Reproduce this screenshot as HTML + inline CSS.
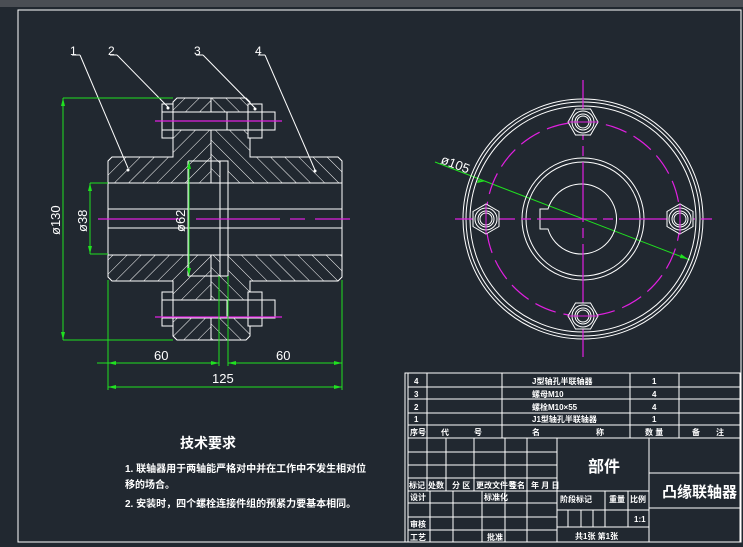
<!DOCTYPE html>
<html><head><meta charset="utf-8"><style>
html,body{margin:0;padding:0;background:#212830;}
svg{display:block}
text{font-family:"Liberation Sans","Noto Sans CJK SC",sans-serif;fill:#fff}
.cj{font-family:"Liberation Sans","Noto Sans CJK SC",sans-serif;font-weight:bold}
</style></head><body>
<svg width="743" height="547" viewBox="0 0 743 547" xmlns="http://www.w3.org/2000/svg">
<defs>
<pattern id="hf" patternUnits="userSpaceOnUse" width="10" height="10" patternTransform="rotate(45)"><line x1="0" y1="0" x2="0" y2="10" stroke="#fff" stroke-width="1"/></pattern>
<pattern id="hb" patternUnits="userSpaceOnUse" width="10" height="10" patternTransform="rotate(-45)"><line x1="0" y1="0" x2="0" y2="10" stroke="#fff" stroke-width="1"/></pattern>
</defs>
<rect width="743" height="547" fill="#212830"/>
<rect x="0" y="0" width="743" height="7" fill="#4a4e54"/>
<rect x="18" y="10" width="723" height="532" fill="none" stroke="#fff" stroke-width="1"/>

<!-- left view hatched bodies -->
<g stroke="#fff" stroke-width="1">
<polygon points="108,161 112,157 173,157 173,102 177,98 211,98 211,183 108,183" fill="url(#hf)"/>
<polygon points="211,98 246,98 250,102 250,157 338,157 342,161 342,183 211,183" fill="url(#hb)"/>
<polygon points="108,277 112,281 173,281 173,336 177,340 211,340 211,255 108,255" fill="url(#hf)"/>
<polygon points="211,340 246,340 250,336 250,281 338,281 342,277 342,255 211,255" fill="url(#hb)"/>
<rect x="108" y="183" width="234" height="72" fill="#212830"/>
<rect x="220" y="161" width="8" height="115" fill="#212830"/>
<line x1="108" y1="183" x2="342" y2="183"/><line x1="108" y1="255" x2="342" y2="255"/>
<line x1="108" y1="209" x2="342" y2="209"/><line x1="108" y1="228" x2="342" y2="228"/>
<line x1="108" y1="161" x2="108" y2="277"/><line x1="342" y1="161" x2="342" y2="277"/>
<line x1="220" y1="161" x2="220" y2="276"/><line x1="228" y1="161" x2="228" y2="276"/>
<line x1="188" y1="161" x2="220" y2="161"/><line x1="188" y1="276" x2="220" y2="276"/>
<line x1="188" y1="161" x2="188" y2="276"/>
<line x1="211" y1="98" x2="211" y2="161"/><line x1="211" y1="276" x2="211" y2="340"/>
<!-- bolts -->
<g fill="#212830">
<rect x="173" y="112" width="102" height="18"/>
<rect x="162" y="104" width="11" height="34"/><rect x="248" y="104" width="14" height="34"/>
<line x1="162" y1="112" x2="173" y2="112"/><line x1="162" y1="130" x2="173" y2="130"/>
<line x1="248" y1="112" x2="262" y2="112"/><line x1="248" y1="130" x2="262" y2="130"/>
<line x1="227" y1="112" x2="227" y2="130"/>
<rect x="173" y="300" width="102" height="18"/>
<rect x="162" y="292" width="11" height="34"/><rect x="248" y="292" width="14" height="34"/>
<line x1="162" y1="300" x2="173" y2="300"/><line x1="162" y1="318" x2="173" y2="318"/>
<line x1="248" y1="300" x2="262" y2="300"/><line x1="248" y1="318" x2="262" y2="318"/>
<line x1="227" y1="300" x2="227" y2="318"/>
</g>
<!-- leaders -->
<line x1="80" y1="55" x2="128" y2="168"/><line x1="117" y1="55" x2="168" y2="107"/>
<line x1="203" y1="55" x2="255" y2="108"/><line x1="265" y1="55" x2="315" y2="170"/>
<line x1="72" y1="55" x2="80" y2="55"/><line x1="110" y1="55" x2="117" y2="55"/>
<line x1="196" y1="55" x2="203" y2="55"/><line x1="258" y1="55" x2="265" y2="55"/>
</g>
<g fill="#fff"><circle cx="128" cy="170" r="1.5"/><circle cx="168" cy="108" r="1.5"/><circle cx="255" cy="109" r="1.5"/><circle cx="315" cy="171" r="1.5"/></g>
<g font-size="12"><text x="70" y="55">1</text><text x="108" y="55">2</text><text x="194" y="55">3</text><text x="255" y="55">4</text></g>
<!-- center lines magenta -->
<g stroke="#e020e0" stroke-width="1.2">
<line x1="98" y1="219" x2="180" y2="219"/><line x1="196" y1="219" x2="280" y2="219"/><line x1="290" y1="219" x2="305" y2="219"/><line x1="315" y1="219" x2="350" y2="219"/>
<line x1="155" y1="121" x2="282" y2="121"/><line x1="155" y1="317" x2="282" y2="317"/>
</g>
<!-- dimensions green -->
<g stroke="#20e020" stroke-width="1" fill="none">
<line x1="63" y1="98" x2="63" y2="340"/><line x1="63" y1="98" x2="173" y2="98"/><line x1="63" y1="340" x2="173" y2="340"/>
<line x1="90" y1="183" x2="90" y2="254"/><line x1="90" y1="183" x2="108" y2="183"/><line x1="90" y1="254" x2="108" y2="254"/>
<line x1="189" y1="161" x2="189" y2="276"/>
<line x1="108" y1="280" x2="108" y2="390"/><line x1="219" y1="276" x2="219" y2="366"/><line x1="228" y1="276" x2="228" y2="366"/><line x1="342" y1="280" x2="342" y2="390"/>
<line x1="97" y1="363" x2="219" y2="363"/><line x1="228" y1="363" x2="342" y2="363"/>
<line x1="108" y1="387" x2="342" y2="387"/>
<line x1="435" y1="162" x2="690" y2="260"/>
</g>
<g fill="#20e020">
<polygon points="63,98 61,106 65,106"/><polygon points="63,340 61,332 65,332"/>
<polygon points="90,183 88,191 92,191"/><polygon points="90,254 88,246 92,246"/>
<polygon points="189,161 187,169 191,169"/><polygon points="189,276 187,268 191,268"/>
<polygon points="108,363 116,361 116,365"/><polygon points="219,363 211,361 211,365"/>
<polygon points="228,363 236,361 236,365"/><polygon points="342,363 334,361 334,365"/>
<polygon points="108,387 116,385 116,389"/><polygon points="342,387 334,385 334,389"/>
<polygon points="486,181 478,180 477,183"/><polygon points="688,259 681,254 680,258"/>
</g>
<g font-size="13" fill="#fff">
<text transform="translate(60,235) rotate(-90)">ø130</text>
<text transform="translate(87,232) rotate(-90)">ø38</text>
<text transform="translate(185,232) rotate(-90)">ø62</text>
<text x="154" y="360">60</text><text x="276" y="360">60</text><text x="212" y="383">125</text>
<text transform="translate(440,163) rotate(21)">ø105</text>
</g>

<!-- right view -->
<g stroke="#fff" stroke-width="1" fill="none">
<circle cx="583" cy="219" r="120"/><circle cx="583" cy="219" r="117"/><circle cx="583" cy="219" r="113"/>
<circle cx="583" cy="219" r="61"/><circle cx="583" cy="219" r="57"/>
<path d="M548,209 A35,35 0 1 1 548,229 L540,229 L540,209 Z"/>
</g>
<circle cx="583" cy="219" r="97" fill="none" stroke="#e020e0" stroke-width="1.2" stroke-dasharray="22,8"/>
<g stroke="#e020e0" stroke-width="1.2">
<line x1="583" y1="80" x2="583" y2="357" stroke-dasharray="60,6,10,6"/>
<line x1="455" y1="219" x2="712" y2="219" stroke-dasharray="60,6,10,6"/>
</g>
<g stroke="#fff" stroke-width="1" fill="#212830">
<g transform="translate(583,122)"><polygon points="15,0 7.5,13 -7.5,13 -15,0 -7.5,-13 7.5,-13"/><circle r="11"/><circle r="8"/><circle r="6"/></g>
<g transform="translate(583,316)"><polygon points="15,0 7.5,13 -7.5,13 -15,0 -7.5,-13 7.5,-13"/><circle r="11"/><circle r="8"/><circle r="6"/></g>
<g transform="translate(486,219)"><polygon points="0,15 13,7.5 13,-7.5 0,-15 -13,-7.5 -13,7.5"/><circle r="11"/><circle r="8"/><circle r="6"/></g>
<g transform="translate(680,219)"><polygon points="0,15 13,7.5 13,-7.5 0,-15 -13,-7.5 -13,7.5"/><circle r="11"/><circle r="8"/><circle r="6"/></g>
</g>
<g stroke="#e020e0" stroke-width="1"><line x1="568" y1="122" x2="598" y2="122"/><line x1="568" y1="316" x2="598" y2="316"/><line x1="486" y1="204" x2="486" y2="234"/><line x1="680" y1="204" x2="680" y2="234"/></g>

<!-- notes -->
<text class="cj" x="180" y="448" font-size="14">技术要求</text>
<text class="cj" x="125" y="472" font-size="10">1. 联轴器用于两轴能严格对中并在工作中不发生相对位</text>
<text class="cj" x="125" y="488" font-size="10">移的场合。</text>
<text class="cj" x="125" y="507" font-size="10">2. 安装时，四个螺栓连接件组的预紧力要基本相同。</text>

<!-- title block -->
<g stroke="#fff" stroke-width="1" fill="none">
<rect x="405" y="373" width="336" height="169"/>
<rect x="408" y="373" width="332" height="169"/>
<line x1="408" y1="387" x2="740" y2="387"/><line x1="408" y1="399" x2="740" y2="399"/><line x1="408" y1="413" x2="740" y2="413"/><line x1="408" y1="425" x2="740" y2="425"/><line x1="408" y1="438" x2="740" y2="438"/>
<line x1="427" y1="373" x2="427" y2="438"/><line x1="502" y1="373" x2="502" y2="438"/><line x1="630" y1="373" x2="630" y2="438"/><line x1="679" y1="373" x2="679" y2="438"/>
<line x1="408" y1="452" x2="557" y2="452"/><line x1="408" y1="465" x2="557" y2="465"/><line x1="408" y1="478" x2="557" y2="478"/><line x1="408" y1="491" x2="649" y2="491"/><line x1="408" y1="503" x2="557" y2="503"/><line x1="408" y1="517" x2="557" y2="517"/><line x1="408" y1="530" x2="557" y2="530"/>
<line x1="427" y1="438" x2="427" y2="491"/><line x1="446" y1="438" x2="446" y2="491"/><line x1="474" y1="438" x2="474" y2="491"/><line x1="505" y1="438" x2="505" y2="542"/><line x1="527" y1="438" x2="527" y2="542"/>
<line x1="430" y1="491" x2="430" y2="542"/><line x1="453" y1="491" x2="453" y2="542"/><line x1="482" y1="491" x2="482" y2="542"/>
<line x1="557" y1="438" x2="557" y2="542"/><line x1="649" y1="438" x2="649" y2="542"/>
<line x1="557" y1="510" x2="649" y2="510"/><line x1="557" y1="527" x2="649" y2="527"/>
<line x1="605" y1="491" x2="605" y2="527"/><line x1="628" y1="491" x2="628" y2="527"/>
<line x1="568" y1="510" x2="568" y2="527"/><line x1="581" y1="510" x2="581" y2="527"/><line x1="593" y1="510" x2="593" y2="527"/>
<line x1="649" y1="473" x2="740" y2="473"/><line x1="649" y1="508" x2="740" y2="508"/>
</g>
<g class="cj" font-size="8">
<text x="414" y="384">4</text><text x="414" y="397">3</text><text x="414" y="410">2</text><text x="414" y="422">1</text>
<text x="532" y="384">J型轴孔半联轴器</text><text x="532" y="397">螺母M10</text><text x="532" y="410">螺栓M10×55</text><text x="532" y="422">J1型轴孔半联轴器</text>
<text x="652" y="384">1</text><text x="652" y="397">4</text><text x="652" y="410">4</text><text x="652" y="422">1</text>
<text x="410" y="435">序号</text><text x="441" y="435">代</text><text x="474" y="435">号</text><text x="532" y="435">名</text><text x="596" y="435">称</text><text x="645" y="435">数 量</text><text x="692" y="435">备</text><text x="716" y="435">注</text>
<text x="409" y="488">标记</text><text x="428" y="488">处数</text><text x="452" y="488">分 区</text><text x="476" y="488">更改文件号</text><text x="509" y="488">签名</text><text x="531" y="488">年 月 日</text>
<text x="410" y="500">设计</text><text x="484" y="500">标准化</text><text x="410" y="527">审核</text><text x="410" y="540">工艺</text><text x="487" y="540">批准</text>
<text x="560" y="502">阶段标记</text><text x="609" y="502">重量</text><text x="630" y="502">比例</text><text x="634" y="522">1:1</text>
<text x="575" y="539">共1张  第1张</text>
</g>
<text class="cj" x="588" y="472" font-size="16">部件</text>
<text class="cj" x="662" y="497" font-size="15">凸缘联轴器</text>
</svg>
</body></html>
